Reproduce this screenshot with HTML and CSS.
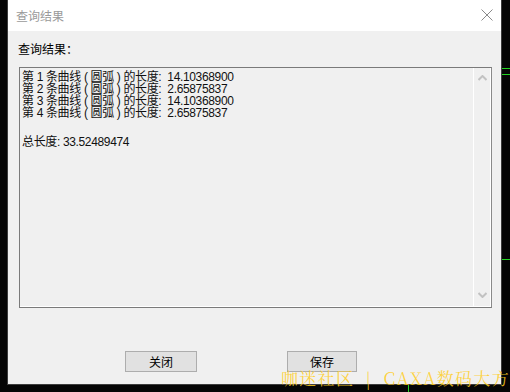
FILE: index.html
```html
<!DOCTYPE html>
<html>
<head>
    <meta charset="UTF-8">
    <title>查询结果</title>
    <link rel="stylesheet" href="styles.css">
</head>
<body>
    <div class="desk">
        <!-- ダイアログ -->
        <div class="dialog">
            <div class="title-bar">
                <span class="title">查询结果</span>
                <svg class="close" width="12" height="12" viewBox="0 0 12 12">
                    <path d="M0.5 0.5 L11.5 11.5 M11.5 0.5 L0.5 11.5" stroke="#8a8a8a" stroke-width="1" fill="none"/>
                </svg>
            </div>
            <div class="dialog-body">
                <div class="label">查询结果：</div>
                <div class="result-box">
                    <div class="result-text">
                        <div>第 1 条曲线 ( 圆弧 ) 的长度:&nbsp; 14.10368900</div>
                        <div>第 2 条曲线 ( 圆弧 ) 的长度:&nbsp; 2.65875837</div>
                        <div>第 3 条曲线 ( 圆弧 ) 的长度:&nbsp; 14.10368900</div>
                        <div>第 4 条曲线 ( 圆弧 ) 的长度:&nbsp; 2.65875837</div>
                        <div class="blank"></div>
                        <div>总长度: 33.52489474</div>
                    </div>
                    <div class="scrollbar">
                        <svg width="9" height="6" viewBox="0 0 9 6"><path d="M0.5 5 L4.5 1 L8.5 5" stroke="#c2c2c2" stroke-width="2" fill="none"/></svg>
                        <svg width="9" height="6" viewBox="0 0 9 6"><path d="M0.5 1 L4.5 5 L8.5 1" stroke="#c2c2c2" stroke-width="2" fill="none"/></svg>
                    </div>
                </div>
                <div class="buttons">
                    <button class="btn btn-close">关闭</button>
                    <button class="btn btn-save">保存</button>
                </div>
            </div>
        </div>
        <div class="side-lines">
            <span class="gline g1"></span>
            <span class="gline g2"></span>
            <span class="gline g3"></span>
        </div>
    </div>
    <div class="vline"></div>
    <!-- ウォーターマーク -->
    <div class="watermark">咖迷社区 &nbsp;|&nbsp; CAXA数码大方</div>
</body>
</html>
```

FILE: styles.css
```css
body {
    margin: 0;
    padding: 0;
    width: 510px;
    height: 392px;
    background: #050505;
    font-family: "Liberation Sans", "Noto Sans CJK SC", sans-serif;
    font-size: 12px;
    overflow: hidden;
    position: relative;
}

.desk {
    display: flex;
    height: 385px;
}

/* ダイアログ */
.dialog {
    margin-left: 7px;
    width: 493px;
    height: 384px;
    border-left: 1px solid #3d3d3d;
    border-right: 1px solid #3d3d3d;
    border-bottom: 1px solid #3d3d3d;
    background: #f0f0f0;
    display: flex;
    flex-direction: column;
}

.title-bar {
    height: 31px;
    background: #ffffff;
    display: flex;
    align-items: center;
    justify-content: space-between;
    padding: 0 8px 0 8px;
}

.title {
    color: #9a9a9a;
    font-family: "Noto Sans CJK SC", sans-serif;
    font-size: 12px;
    margin-top: -1px;
}

.close {
    margin-top: -1px;
}

.dialog-body {
    flex: 1;
    display: flex;
    flex-direction: column;
    padding: 10px 10px 0 11px;
}

.label {
    font-family: "Noto Sans CJK SC", sans-serif;
    color: #000;
    height: 16px;
    line-height: 16px;
    margin-left: -1px;
}

.result-box {
    margin-top: 10px;
    width: 471px;
    height: 239px;
    border: 1px solid #7a7a7a;
    border-right-color: #8a8a8a;
    box-shadow: inset -1px -1px 0 #ffffff;
    display: flex;
}

.result-text {
    flex: 1;
    padding: 3px 0 0 2px;
    line-height: 12px;
    color: #111;
    letter-spacing: -0.35px;
}

.result-text .blank {
    height: 17px;
}

.scrollbar {
    width: 17px;
    border-left: 1px solid #ffffff;
    display: flex;
    flex-direction: column;
    justify-content: space-between;
    align-items: center;
    padding: 7px 0 9px 0;
}

.buttons {
    display: flex;
    margin-top: 43px;
    padding-left: 106px;
    gap: 90px;
}

.btn {
    width: 72px;
    height: 21px;
    background: #e1e1e1;
    border: 1px solid #adadad;
    font-family: "Noto Sans CJK SC", sans-serif;
    font-size: 12px;
    color: #000;
    padding: 0;
}

.btn-save {
    width: 70px;
}

/* 右側の緑線 */
.side-lines {
    flex: 1;
    display: flex;
    flex-direction: column;
}

.gline {
    display: block;
    height: 1px;
    background: #22d322;
}

.g1 { margin-top: 68px; }
.g2 { margin-top: 5px; }
.g3 { margin-top: 184px; }

.vline {
    width: 1px;
    height: 7px;
    margin-left: 408px;
    background: #22d322;
}

.watermark {
    position: absolute;
    left: 281px;
    top: 365px;
    color: rgba(255, 205, 30, 0.85);
    font-family: "Noto Serif CJK SC", "Liberation Serif", serif;
    font-size: 17px;
    letter-spacing: 1.3px;
    white-space: nowrap;
}
```
